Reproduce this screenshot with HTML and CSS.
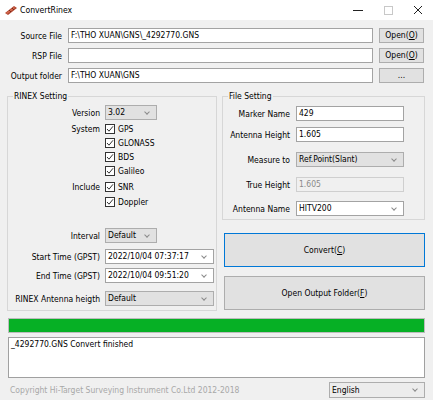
FILE: index.html
```html
<!DOCTYPE html>
<html>
<head>
<meta charset="utf-8">
<title>ConvertRinex</title>
<link rel="stylesheet" href="styles.css">
</head>
<body>
<div class="window">
  <div class="titlebar">
    <svg class="appicon" width="14" height="12" viewBox="0 0 14 12">
      <polygon points="1,9 10,2 13,4 4,11" fill="#b0452f"/>
      <polygon points="2,9 10,3 11,4 3,10" fill="#d46a4f"/>
      <line x1="5" y1="6" x2="7" y2="8" stroke="#7a2a1a" stroke-width="1"/>
      <line x1="8" y1="4" x2="10" y2="6" stroke="#7a2a1a" stroke-width="1"/>
    </svg>
    <span class="title">ConvertRinex</span>
    <div class="wincontrols">
      <svg class="wc" width="10" height="10" viewBox="0 0 10 10"><line x1="0" y1="5.5" x2="10" y2="5.5" stroke="#222" stroke-width="1"/></svg>
      <svg class="wc" width="10" height="10" viewBox="0 0 10 10"><rect x="1.5" y="1.5" width="8" height="8" fill="none" stroke="#c8c8c8" stroke-width="1"/></svg>
      <svg class="wc" width="10" height="10" viewBox="0 0 10 10"><path d="M1 1 L9 9 M9 1 L1 9" stroke="#222" stroke-width="1"/></svg>
    </div>
  </div>
  <div class="content">
    <div class="paths">
      <span class="plabel">Source File</span>
      <div class="field">F:\THO XUAN\GNS\_4292770.GNS</div>
      <button class="btn">Open(<u>O</u>)</button>
      <span class="plabel">RSP File</span>
      <div class="field"></div>
      <button class="btn">Open(<u>O</u>)</button>
      <span class="plabel">Output folder</span>
      <div class="field">F:\THO XUAN\GNS</div>
      <button class="btn">...</button>
    </div>

    <div class="groups">
      <div class="group rinex">
        <span class="legend">RINEX Setting</span>
        <div class="row r-version">
          <span class="lab">Version</span>
          <div class="combo gray w-small">3.02<span class="chev"></span></div>
        </div>
        <div class="row chk r-gps">
          <span class="lab">System</span>
          <span class="cb"><span class="box"><svg width="8" height="8" viewBox="0 0 8 8"><path d="M1 4 L3 6.2 L7 1.3" fill="none" stroke="#333" stroke-width="1"/></svg></span>GPS</span>
        </div>
        <div class="row chk">
          <span class="lab"></span>
          <span class="cb"><span class="box"><svg width="8" height="8" viewBox="0 0 8 8"><path d="M1 4 L3 6.2 L7 1.3" fill="none" stroke="#333" stroke-width="1"/></svg></span>GLONASS</span>
        </div>
        <div class="row chk">
          <span class="lab"></span>
          <span class="cb"><span class="box"><svg width="8" height="8" viewBox="0 0 8 8"><path d="M1 4 L3 6.2 L7 1.3" fill="none" stroke="#333" stroke-width="1"/></svg></span>BDS</span>
        </div>
        <div class="row chk">
          <span class="lab"></span>
          <span class="cb"><span class="box"><svg width="8" height="8" viewBox="0 0 8 8"><path d="M1 4 L3 6.2 L7 1.3" fill="none" stroke="#333" stroke-width="1"/></svg></span>Galileo</span>
        </div>
        <div class="row chk r-snr">
          <span class="lab">Include</span>
          <span class="cb"><span class="box"><svg width="8" height="8" viewBox="0 0 8 8"><path d="M1 4 L3 6.2 L7 1.3" fill="none" stroke="#333" stroke-width="1"/></svg></span>SNR</span>
        </div>
        <div class="row chk r-doppler">
          <span class="lab"></span>
          <span class="cb"><span class="box"><svg width="8" height="8" viewBox="0 0 8 8"><path d="M1 4 L3 6.2 L7 1.3" fill="none" stroke="#333" stroke-width="1"/></svg></span>Doppler</span>
        </div>
        <div class="row r-interval">
          <span class="lab">Interval</span>
          <div class="combo gray w-small">Default<span class="chev"></span></div>
        </div>
        <div class="row r-start">
          <span class="lab">Start Time (GPST)</span>
          <div class="combo white w-wide">2022/10/04 07:37:17<span class="chev"></span></div>
        </div>
        <div class="row r-end">
          <span class="lab">End Time (GPST)</span>
          <div class="combo white w-wide">2022/10/04 09:51:20<span class="chev"></span></div>
        </div>
        <div class="row r-anth">
          <span class="lab">RINEX Antenna heigth</span>
          <div class="combo gray w-wide">Default<span class="chev"></span></div>
        </div>
      </div>

      <div class="rightcol">
        <div class="group fileset">
          <span class="legend">File Setting</span>
          <div class="frow f-marker">
            <span class="lab">Marker Name</span>
            <div class="field">429</div>
          </div>
          <div class="frow f-ant">
            <span class="lab">Antenna Height</span>
            <div class="field">1.605</div>
          </div>
          <div class="frow f-measure">
            <span class="lab">Measure to</span>
            <div class="combo gray">Ref.Point(Slant)<span class="chev"></span></div>
          </div>
          <div class="frow f-true">
            <span class="lab">True Height</span>
            <div class="field disabled">1.605</div>
          </div>
          <div class="frow f-name">
            <span class="lab">Antenna Name</span>
            <div class="combo white">HITV200<span class="chev"></span></div>
          </div>
        </div>
        <button class="bigbtn convert">Convert(<u>C</u>)</button>
        <button class="bigbtn openfolder">Open Output Folder(<u>F</u>)</button>
      </div>
    </div>

    <div class="progress"></div>
    <div class="log">_4292770.GNS Convert finished</div>
    <div class="footer">
      <span class="copy">Copyright Hi-Target Surveying Instrument Co.Ltd 2012-2018</span>
      <div class="combo lang">English<span class="chev"></span></div>
    </div>
  </div>
</div>
</body>
</html>
```

FILE: styles.css
```css
* { box-sizing: border-box; }
html, body { margin: 0; padding: 0; }
body {
  width: 433px;
  height: 400px;
  overflow: hidden;
  background: #f0f0f0;
  font-family: "DejaVu Sans Condensed", "DejaVu Sans", sans-serif;
  font-stretch: condensed;
  font-size: 8.5px;
  color: #000;
}
.window { width: 433px; height: 400px; display: flex; flex-direction: column; }

.titlebar {
  height: 20px;
  background: #fff;
  display: flex;
  align-items: center;
  padding-left: 4px;
}
.appicon { margin-right: 2px; }
.title { font-size: 8.6px; }
.wincontrols { margin-left: auto; display: flex; align-items: center; gap: 20px; padding-right: 10px; }

.content { flex: 1; padding: 8px 0 0 7px; display: flex; flex-direction: column; }

.paths {
  display: grid;
  grid-template-columns: 55px 305px 45px;
  grid-auto-rows: 15px;
  column-gap: 6px;
  row-gap: 5px;
}
.plabel { text-align: right; align-self: center; white-space: nowrap; }

.field {
  background: #fff;
  border: 1px solid #a3a3a3;
  height: 15px;
  padding: 0 2px;
  line-height: 13px;
  white-space: nowrap;
  overflow: hidden;
}
.field.disabled { background: #f0f0f0; border-color: #cfcfcf; color: #8a8a8a; }

.btn {
  font: inherit;
  font-stretch: condensed;
  height: 15px;
  padding: 0;
  background: #e1e1e1;
  border: 1px solid #adadad;
  color: #000;
  line-height: 13px;
}

.groups { display: flex; gap: 5px; margin-top: 13px; }

.group {
  position: relative;
  border: 1px solid #d7d7d7;
}
.legend {
  position: absolute;
  top: -6px;
  left: 5px;
  background: #f0f0f0;
  padding: 0 1px;
  line-height: 10px;
}

.rinex { width: 210px; height: 215px; padding-top: 8px; display: flex; flex-direction: column; }
.row { display: flex; align-items: center; height: 15px; }
.row .lab { width: 92px; text-align: right; margin-right: 5px; white-space: nowrap; }
.row.chk { height: 14px; }
.r-gps { margin-top: 2px; }
.r-snr { margin-top: 2px; }
.r-doppler { margin-top: 1px; }
.r-interval { margin-top: 19px; }
.r-start { margin-top: 6px; }
.r-end { margin-top: 4px; }
.r-anth { margin-top: 8px; }

.cb { display: flex; align-items: center; }
.box {
  width: 10px; height: 10px;
  border: 1px solid #333;
  background: #fff;
  margin-right: 3px;
  display: flex; align-items: center; justify-content: center;
}
.box svg { display: block; }

.combo {
  position: relative;
  height: 15px;
  line-height: 13px;
  padding: 0 2px;
  border: 1px solid #adadad;
  white-space: nowrap;
}
.combo.gray { background: #e1e1e1; }
.combo.white { background: #fff; border-color: #a3a3a3; }
.w-small { width: 52px; }
.w-wide { width: 109px; }
.chev {
  position: absolute;
  right: 7px;
  top: 4px;
  width: 4px; height: 4px;
  border-right: 1px solid #8a8a8a;
  border-bottom: 1px solid #8a8a8a;
  transform: rotate(45deg);
}

.rightcol { width: 203px; display: flex; flex-direction: column; }
.fileset { height: 124px; padding-top: 9px; display: flex; flex-direction: column; }
.frow { display: flex; align-items: center; height: 15px; }
.frow .lab { width: 67px; text-align: right; margin-right: 6px; white-space: nowrap; }
.frow .field, .frow .combo { width: 108px; }
.f-ant { margin-top: 6px; }
.f-measure { margin-top: 10px; }
.f-true { margin-top: 10px; }
.f-name { margin-top: 9px; }

.bigbtn {
  font: inherit;
  font-stretch: condensed;
  height: 34px;
  width: 201px;
  margin-left: 2px;
  background: #e1e1e1;
  border: 1px solid #adadad;
  color: #000;
  padding: 0;
}
.convert { margin-top: 13px; border-color: #0078d7; }
.openfolder { margin-top: 9px; }

.progress {
  margin-top: 7px;
  margin-left: 1px;
  width: 417px;
  height: 15px;
  background: #06b025;
  border: 1px solid #bcbcbc;
}
.log {
  margin-top: 4px;
  margin-left: 1px;
  width: 417px;
  height: 41px;
  background: #fff;
  border: 1px solid #a0a0a0;
  padding: 1px 2px;
  line-height: 11px;
}
.footer {
  display: flex;
  align-items: center;
  margin-top: 3px;
  height: 17px;
}
.copy { color: #a8a8a8; margin-left: 3px; }
.combo.lang {
  margin-left: auto;
  margin-right: 8px;
  width: 96px;
  height: 16px;
  line-height: 14px;
  background: #ececec;
  border-color: #adadad;
}
.combo.lang .chev { top: 4px; }
```
